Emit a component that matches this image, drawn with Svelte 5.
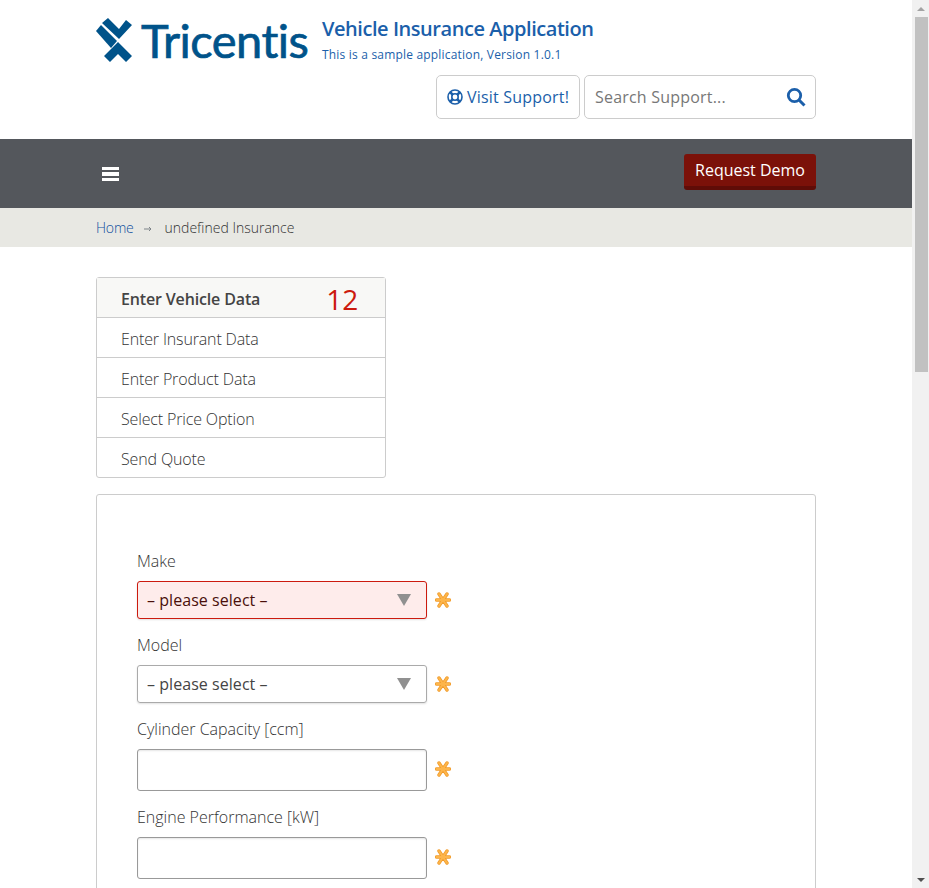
<script>
	const steps = [
		{ label: 'Enter Vehicle Data', count: 12 },
		{ label: 'Enter Insurant Data' },
		{ label: 'Enter Product Data' },
		{ label: 'Select Price Option' },
		{ label: 'Send Quote' }
	];

	const fields = [
		{ label: 'Make', type: 'select', error: true },
		{ label: 'Model', type: 'select' },
		{ label: 'Cylinder Capacity [ccm]', type: 'input' },
		{ label: 'Engine Performance [kW]', type: 'input' }
	];
</script>

<div class="window">
	<div class="page">
		<header class="top container">
			<div class="brand">
				<div class="logo">
					<svg class="mark" viewBox="2 3 36 44" aria-hidden="true">
						<path d="M14 3 L25 14 L32 5 L38 10 L25 24 L8 8 Z" fill="#00538a" />
						<path d="M7 10 L23 26 L17 33 L2 16 Z" fill="#00538a" />
						<path d="M24 27 L38 41 L32 47 L24 39 L16 47 L10 41 Z" fill="#00538a" />
					</svg>
					<span class="wordmark">Tricentis</span>
				</div>
				<div class="titles">
					<h1>Vehicle Insurance Application</h1>
					<p>This is a sample application, Version 1.0.1</p>
				</div>
			</div>
			<div class="tools">
				<a class="support" href="#top">
					<svg class="buoy" viewBox="0 0 16 16" aria-hidden="true">
						<circle cx="8" cy="8" r="7" fill="none" stroke="#1b5faa" stroke-width="1.6" />
						<circle cx="8" cy="8" r="3.2" fill="none" stroke="#1b5faa" stroke-width="1.6" />
						<path d="M3 3 L5.8 5.8 M13 3 L10.2 5.8 M3 13 L5.8 10.2 M13 13 L10.2 10.2" stroke="#1b5faa" stroke-width="2.6" />
					</svg>
					Visit Support!
				</a>
				<div class="search">
					<span>Search Support...</span>
					<svg viewBox="0 0 20 20" aria-hidden="true">
						<circle cx="8.5" cy="8.5" r="6.2" fill="none" stroke="#1b5faa" stroke-width="2.8" />
						<path d="M13 13 L18.5 18.5" stroke="#1b5faa" stroke-width="3" />
					</svg>
				</div>
			</div>
		</header>

		<nav class="bar">
			<div class="container bar-inner">
				<div class="burger"><i></i><i></i><i></i></div>
				<a class="demo" href="#top">Request Demo</a>
			</div>
		</nav>

		<div class="crumbs">
			<div class="container crumbs-inner">
				<a href="#top">Home</a>
				<svg viewBox="0 0 8 6" aria-hidden="true">
					<path d="M0 3 H7 M5 1 L7 3 L5 5" fill="none" stroke="#7d8388" stroke-width="1" />
				</svg>
				<span>undefined Insurance</span>
			</div>
		</div>

		<main class="container">
			<ol class="steps">
				{#each steps as step, i}
					<li class:active={i === 0}>
						<span>{step.label}</span>
						{#if step.count}<b>{step.count}</b>{/if}
					</li>
				{/each}
			</ol>

			<form class="panel">
				{#each fields as field}
					<div class="field">
						<label for={field.label}>{field.label}</label>
						<div class="row">
							{#if field.type === 'select'}
								<div class="select" class:error={field.error} id={field.label}>
									<span>– please select –</span>
									<i class="caret"></i>
								</div>
							{:else}
								<input id={field.label} type="text" />
							{/if}
							<svg class="star" viewBox="0 0 16 16" aria-hidden="true">
								<path d="M1.5 8 H14.5 M4 2 L12 14 M12 2 L4 14" stroke="#f09a2a" stroke-width="3.4" stroke-linecap="round" />
								<path d="M1.5 8 H14.5 M4 2 L12 14 M12 2 L4 14" stroke="#fdb54a" stroke-width="2" stroke-linecap="round" />
							</svg>
						</div>
					</div>
				{/each}
			</form>
		</main>
	</div>

	<div class="scrollbar">
		<i class="arrow up"></i>
		<div class="thumb"></div>
		<div class="track"></div>
		<i class="arrow down"></i>
	</div>
</div>

<style>
	:global(body) {
		margin: 0;
		font-family: 'Open Sans', sans-serif;
		color: #444;
		background: #fff;
	}

	.window {
		display: flex;
		height: 888px;
		overflow: hidden;
	}

	.page {
		width: 912px;
		flex: none;
		overflow: hidden;
	}

	.container {
		width: 720px;
		margin: 0 0 0 96px;
	}

	.top {
		height: 139px;
		box-sizing: border-box;
		padding-top: 15px;
	}

	.brand {
		display: flex;
		height: 60px;
	}

	.logo {
		display: flex;
		align-items: center;
		width: 226px;
		height: 50px;
	}

	.mark {
		width: 36px;
		height: 44px;
		flex: none;
	}

	.wordmark {
		margin-left: 9px;
		font-family: Lato, sans-serif;
		font-size: 47px;
		line-height: 50px;
		letter-spacing: -0.55px;
		color: #00538a;
		-webkit-text-stroke: 0.7px #00538a;
	}

	.titles {
		color: #1b5faa;
	}

	h1 {
		margin: 0;
		font-size: 20px;
		line-height: 28px;
		font-weight: 600;
		letter-spacing: -0.45px;
	}

	p {
		margin: 4px 0 0;
		font-size: 12px;
		line-height: 16px;
		letter-spacing: 0.19px;
	}

	.tools {
		display: flex;
		justify-content: flex-end;
		gap: 4px;
	}

	.support,
	.search {
		height: 44px;
		box-sizing: border-box;
		border: 1px solid #ccc;
		border-radius: 5px;
		display: flex;
		align-items: center;
	}

	.support {
		width: 144px;
		padding-left: 10px;
		gap: 4px;
		font-size: 16px;
		color: #1b5faa;
		text-decoration: none;
		letter-spacing: 0.2px;
	}

	.buoy {
		width: 16px;
		height: 16px;
	}

	.search {
		width: 232px;
		padding: 0 9px 0 10px;
		justify-content: space-between;
		font-size: 16px;
		letter-spacing: 0.2px;
		color: #777;
	}

	.search svg {
		width: 20px;
		height: 20px;
	}

	.bar {
		height: 69px;
		background: #54575c;
	}

	.bar-inner {
		display: flex;
		justify-content: space-between;
		padding-top: 15px;
	}

	.burger {
		display: flex;
		flex-direction: column;
		gap: 2px;
		margin: 13px 0 0 6px;
	}

	.burger i {
		display: block;
		width: 17px;
		height: 3.33px;
		background: #fff;
	}

	.demo {
		width: 132px;
		height: 36px;
		box-sizing: border-box;
		background: #7b1109;
		border-bottom: 4px solid #5f0c07;
		border-radius: 3px;
		color: #fff;
		font-size: 16px;
		line-height: 32px;
		text-align: center;
		text-decoration: none;
	}

	.crumbs {
		height: 39px;
		background: #e8e8e3;
	}

	.crumbs-inner {
		display: flex;
		align-items: center;
		height: 39px;
		font-size: 14px;
	}

	.crumbs a {
		color: #0d4f9e;
		font-weight: 300;
		text-decoration: none;
		letter-spacing: -0.2px;
	}

	.crumbs svg {
		width: 8px;
		height: 6px;
		margin: 3px 13px 0 10px;
	}

	.crumbs span {
		font-weight: 300;
		color: #333;
	}

	main {
		padding-top: 30px;
	}

	.steps {
		list-style: none;
		margin: 0;
		padding: 0;
		width: 290px;
		box-sizing: border-box;
		border: 1px solid #ccc;
		border-radius: 3px;
	}

	.steps li {
		height: 40px;
		box-sizing: border-box;
		padding: 2px 0 0 24px;
		display: flex;
		align-items: center;
		font-size: 16px;
		font-weight: 300;
		letter-spacing: -0.15px;
		color: #333;
		border-top: 1px solid #ccc;
	}

	.steps li:first-child {
		border-top: 0;
		height: 39px;
	}

	.steps li.active {
		background: #f8f8f6;
		font-weight: 600;
		color: #444;
	}

	.steps b {
		margin-left: 66px;
		font-size: 28px;
		line-height: 30px;
		font-weight: 400;
		letter-spacing: 0;
		color: #cc1a0e;
	}

	.panel {
		margin-top: 16px;
		border: 1px solid #ccc;
		border-radius: 3px;
		padding: 55px 40px 40px;
	}

	.field {
		margin-bottom: 15px;
	}

	label {
		display: block;
		font-size: 16px;
		font-weight: 300;
		line-height: 22px;
		color: #333;
		margin-bottom: 9px;
	}

	.row {
		display: flex;
		align-items: center;
		gap: 8px;
	}

	.select {
		width: 290px;
		height: 38px;
		box-sizing: border-box;
		border: 1px solid #aaa;
		border-radius: 3px;
		padding: 0 15px 0 9px;
		display: flex;
		align-items: center;
		justify-content: space-between;
		font-size: 16px;
		letter-spacing: 0.05px;
		color: #444;
		box-shadow: 0 1px 2px rgba(0, 0, 0, 0.12);
	}

	.select.error {
		background: #feeceb;
		border-color: #cc1a0e;
		color: #4a0f0a;
	}

	.caret {
		width: 0;
		height: 0;
		border-left: 7.5px solid transparent;
		border-right: 7.5px solid transparent;
		border-top: 12px solid #909090;
	}

	input {
		width: 290px;
		height: 42px;
		box-sizing: border-box;
		border: 1px solid #999;
		border-radius: 3px;
		background: #fff;
		padding: 0 10px;
		font: inherit;
		box-shadow: inset 0 1px 2px rgba(0, 0, 0, 0.1);
	}

	.star {
		width: 16px;
		height: 16px;
		flex: none;
	}

	input + .star {
		margin-top: -2px;
	}

	.scrollbar {
		width: 17px;
		flex: none;
		background: #f1f1f1;
		display: flex;
		flex-direction: column;
		align-items: center;
	}

	.thumb {
		width: 13px;
		height: 355px;
		margin: 6px 0 0 1px;
		background: #c1c1c1;
	}

	.track {
		flex: 1;
	}

	.arrow {
		width: 0;
		height: 0;
		border-left: 4px solid transparent;
		border-right: 4px solid transparent;
	}

	.arrow.up {
		margin-top: 7px;
		border-bottom: 4px solid #a3a3a3;
	}

	.arrow.down {
		margin-bottom: 6px;
		border-top: 4px solid #505050;
	}
</style>
